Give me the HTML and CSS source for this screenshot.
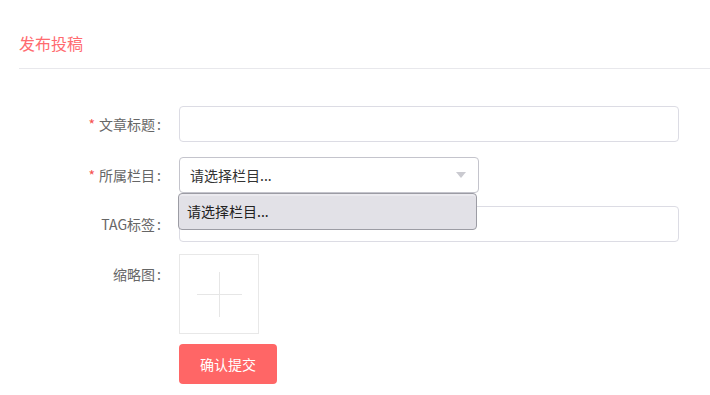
FILE: index.html
```html
<!DOCTYPE html>
<html lang="zh-CN">
<head>
<meta charset="utf-8">
<title>发布投稿</title>
<link rel="stylesheet" href="styles.css">
</head>
<body>
<div class="page">
  <div class="header">发布投稿</div>
  <form class="form">
    <div class="row row-title">
      <label class="label"><span class="req">*</span>文章标题<span class="colon">:</span></label>
      <div class="control"><div class="input wide"></div></div>
    </div>
    <div class="row row-column">
      <label class="label"><span class="req">*</span>所属栏目<span class="colon">:</span></label>
      <div class="control select-wrap">
        <div class="input select">
          <span class="select-text">请选择栏目...</span>
          <span class="arrow"></span>
        </div>
        <div class="dropdown">请选择栏目...</div>
      </div>
    </div>
    <div class="row row-tag">
      <label class="label">TAG标签<span class="colon">:</span></label>
      <div class="control"><div class="input wide"></div></div>
    </div>
    <div class="row">
      <label class="label label-thumb">缩略图<span class="colon">:</span></label>
      <div class="control">
        <div class="thumb"><span class="plus"></span></div>
        <button type="button" class="submit">确认提交</button>
      </div>
    </div>
  </form>
</div>
</body>
</html>
```
FILE: styles.css
```css
html, body {
  margin: 0;
  padding: 0;
  background: #fff;
}
body {
  font-family: "Noto Sans CJK SC", "Liberation Sans", sans-serif;
  font-size: 14px;
  color: #666;
}
.page {
  padding-left: 19px;
}
.header {
  padding: 31px 0 13px;
  line-height: 24px;
  font-size: 16px;
  color: #ff6b6f;
  border-bottom: 1px solid #e8e8ec;
}
.form {
  margin: 37px 0 0;
}
.row {
  display: flex;
  align-items: flex-start;
  margin-bottom: 14px;
}
.row-title {
  margin-bottom: 15px;
}
.row-column {
  margin-bottom: 13px;
}
.row-tag {
  margin-bottom: 12px;
}
.label {
  width: 160px;
  box-sizing: border-box;
  padding-right: 17px;
  text-align: right;
  line-height: 36px;
  color: #666;
  flex: none;
}
.colon {
  padding-left: 2px;
  padding-right: 1px;
}
.label-thumb {
  line-height: 40px;
}
.req {
  color: #f5524f;
  margin-right: 4px;
}
.control {
  display: flex;
  flex-direction: column;
  align-items: flex-start;
}
.input {
  box-sizing: border-box;
  height: 36px;
  border: 1px solid #dcdce4;
  border-radius: 4px;
  background: #fff;
}
.wide {
  width: 500px;
}
.select-wrap {
  position: relative;
}
.select {
  width: 300px;
  border-color: #c4c4cc;
  display: flex;
  align-items: center;
  justify-content: space-between;
  padding: 0 11px 0 10px;
}
.select-text {
  color: #333;
  line-height: 34px;
}
.arrow {
  width: 0;
  height: 0;
  border-left: 5px solid transparent;
  border-right: 5px solid transparent;
  border-top: 6px solid #cacad0;
  margin-right: 1px;
}
.dropdown {
  position: absolute;
  left: -1px;
  top: 36px;
  width: 299px;
  height: 37px;
  box-sizing: border-box;
  background: #e2e1e7;
  border: 1px solid #9c9ca4;
  border-radius: 4px;
  padding-left: 8px;
  line-height: 35px;
  color: #222;
  box-shadow: inset 0 2px 0 #ebeaef;
}
.thumb {
  width: 80px;
  height: 80px;
  box-sizing: border-box;
  border: 1px solid #e8e8e8;
  display: flex;
  align-items: center;
  justify-content: center;
}
.plus {
  position: relative;
  width: 45px;
  height: 45px;
}
.plus::before,
.plus::after {
  content: "";
  position: absolute;
  background: #e6e6e6;
}
.plus::before {
  left: 0;
  right: 0;
  top: 22px;
  height: 1px;
}
.plus::after {
  top: 0;
  bottom: 0;
  left: 22px;
  width: 1px;
}
.submit {
  margin-top: 10px;
  width: 98px;
  height: 40px;
  border: none;
  border-radius: 4px;
  background: #ff6666;
  color: #fff;
  font-family: "Noto Sans CJK SC", "Liberation Sans", sans-serif;
  font-size: 14px;
  padding: 0;
}
```
